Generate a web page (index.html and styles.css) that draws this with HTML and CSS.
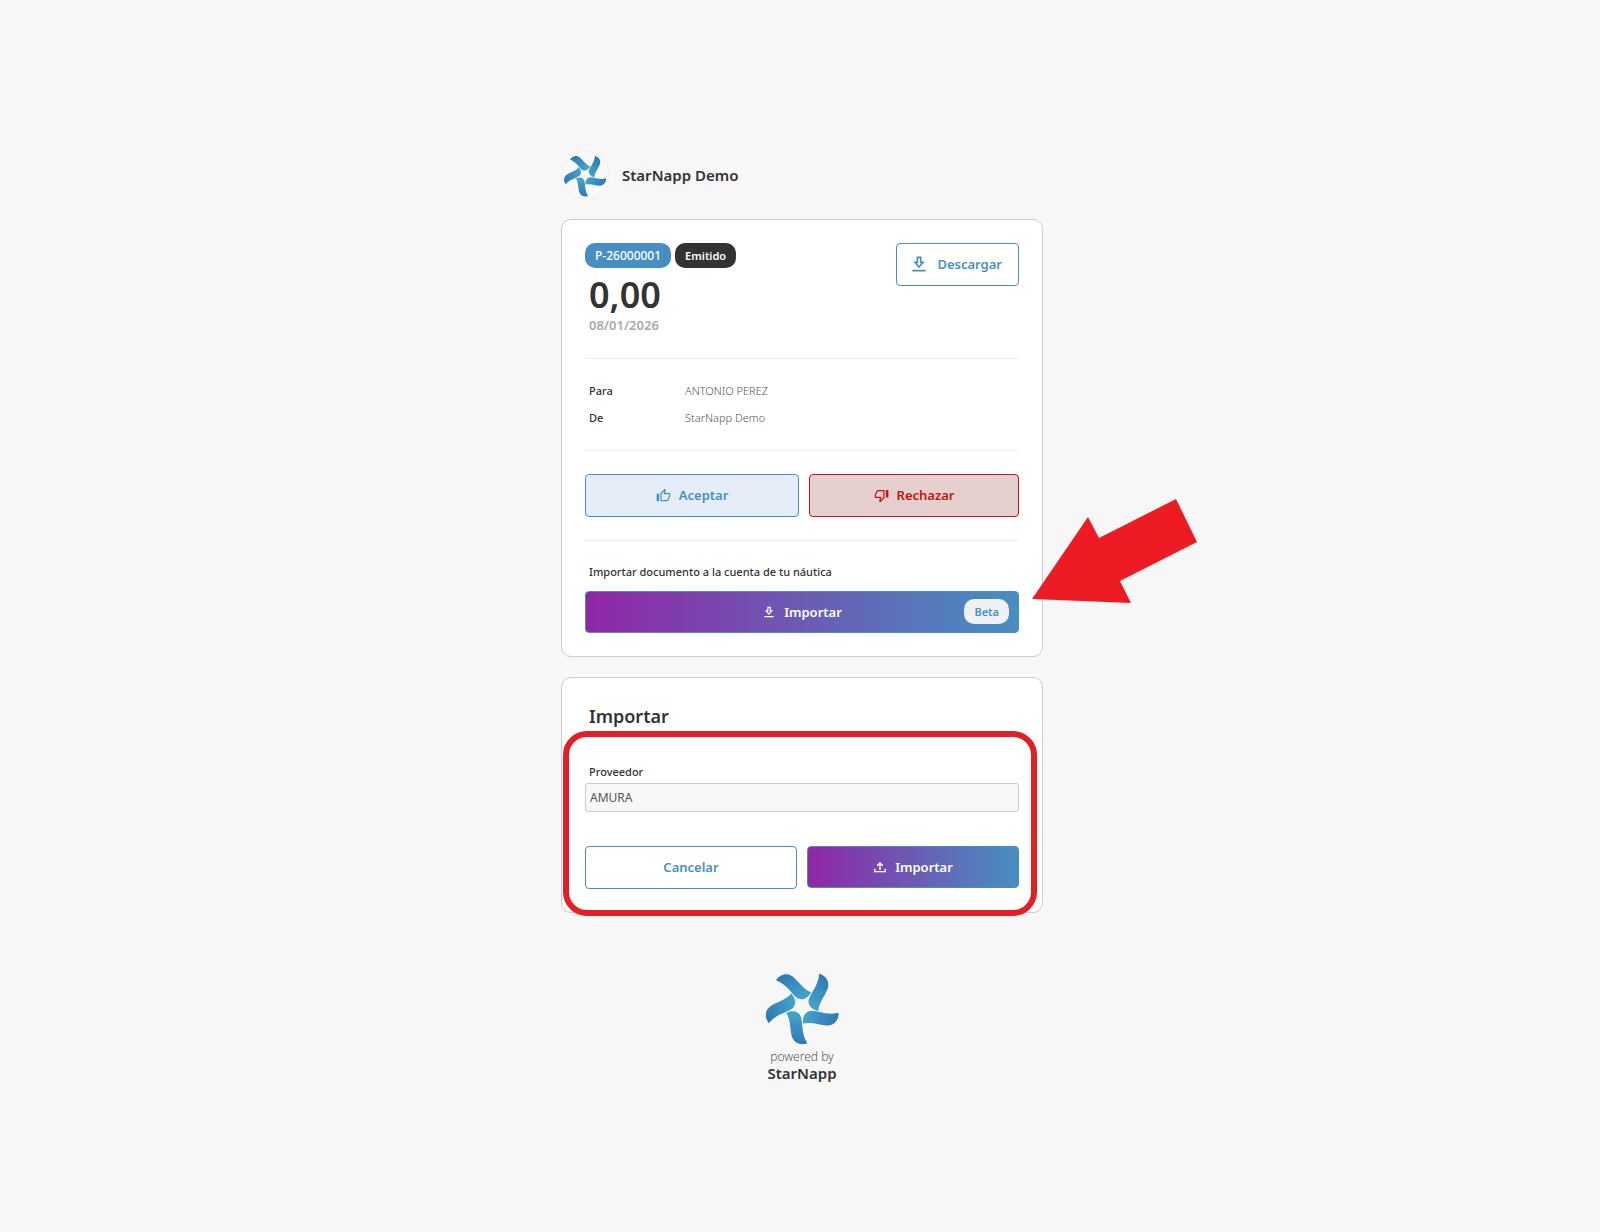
FILE: index.html
```
<!DOCTYPE html>
<html lang="es">
<head>
    <meta charset="UTF-8">
    <meta name="viewport" content="width=device-width, initial-scale=1">
    <title>StarNapp Demo - P-26000001</title>
    <link rel="stylesheet" href="styles.css">
</head>
<body>
    <svg class="defs" aria-hidden="true">
        <defs>
            <linearGradient id="blade-fill" x1="0" y1="0" x2="0" y2="1">
                <stop offset="0" stop-color="#43a6cb"/>
                <stop offset="1" stop-color="#3078b4"/>
            </linearGradient>
            <path id="blade" d="M-46 18 C-30 10 -10 12 -3 30 C3 52 -2 80 16 107 C-2 114 -24 108 -30 86 C-36 60 -32 42 -46 18Z" fill="url(#blade-fill)"/>
            <symbol id="logo" viewBox="-111 -110 222 222">
                <use href="#blade"/>
                <use href="#blade" transform="rotate(72)"/>
                <use href="#blade" transform="rotate(144)"/>
                <use href="#blade" transform="rotate(216)"/>
                <use href="#blade" transform="rotate(288)"/>
            </symbol>
            <symbol id="download" viewBox="0 0 24 24">
                <path fill="currentColor" d="M19 9h-4V3H9v6H5l7 8 7-8zm-8 2V5h2v6h1.600L12 14l-2.600-3H11zM4 19h16v2H4z"/>
            </symbol>
            <symbol id="thumb" viewBox="0 0 24 24">
                <path fill="currentColor" d="M9 21h9c.83 0 1.540-.5 1.840-1.220l3.020-7.050c.09-.23.14-.47.14-.73v-2c0-1.100-.9-2-2-2h-6.310l.95-4.570.03-.32c0-.41-.17-.79-.44-1.060L14.170 1 7.580 7.590C7.220 7.950 7 8.450 7 9v10c0 1.100.9 2 2 2zM9 9l4.340-4.340L12 10h9v2l-3 7H9V9zM1 9h4v12H1z"/>
            </symbol>
            <symbol id="upload" viewBox="0 0 24 24">
                <path fill="none" stroke="currentColor" stroke-width="2.400" d="M12 17V5M7 10 12 5 17 10M3 15v5h18v-5"/>
            </symbol>
        </defs>
    </svg>

    <main class="page">
        <header class="company">
            <svg class="company-logo" aria-hidden="true"><use href="#logo"/></svg>
            <h1>StarNapp Demo</h1>
        </header>

        <section class="card">
            <div class="summary">
                <div>
                    <div class="badges">
                        <span class="badge blue">P-26000001</span>
                        <span class="badge dark">Emitido</span>
                    </div>
                    <p class="amount">0,00</p>
                    <p class="date">08/01/2026</p>
                </div>
                <button type="button" class="btn download">
                    <svg class="icon-lg" aria-hidden="true"><use href="#download"/></svg>
                    Descargar
                </button>
            </div>
            <hr>
            <dl class="parties">
                <dt>Para</dt>
                <dd>ANTONIO PEREZ</dd>
                <dt>De</dt>
                <dd>StarNapp Demo</dd>
            </dl>
            <hr>
            <div class="actions decision">
                <button type="button" class="btn accept">
                    <svg class="icon" aria-hidden="true"><use href="#thumb"/></svg>
                    Aceptar
                </button>
                <button type="button" class="btn reject">
                    <svg class="icon flip" aria-hidden="true"><use href="#thumb"/></svg>
                    Rechazar
                </button>
            </div>
            <hr>
            <p class="label">Importar documento a la cuenta de tu náutica</p>
            <div class="import">
                <button type="button" class="btn gradient">
                    <svg class="icon-sm" aria-hidden="true"><use href="#download"/></svg>
                    Importar
                    <span class="badge beta">Beta</span>
                </button>
                <svg class="arrow" viewBox="0 0 166 105" aria-hidden="true">
                    <polygon points="0,100 56,18 67,39 144,0 165,43 88,82 99,104"/>
                </svg>
            </div>
        </section>

        <form class="card import-form" onsubmit="return false;">
            <h2>Importar</h2>
            <label class="label" for="proveedor">Proveedor</label>
            <input type="text" id="proveedor" value="AMURA" readonly>
            <div class="actions">
                <button type="button" class="btn">Cancelar</button>
                <button type="submit" class="btn gradient">
                    <svg class="icon-sm" aria-hidden="true"><use href="#upload"/></svg>
                    Importar
                </button>
            </div>
            <div class="highlight"></div>
        </form>

        <footer class="powered">
            <svg class="powered-logo" aria-hidden="true"><use href="#logo"/></svg>
            <span>powered by</span>
            <strong>StarNapp</strong>
        </footer>
    </main>
</body>
</html>
```
FILE: styles.css
```
* {
    box-sizing: border-box;
}
body {
    display: flex;
    align-items: center;
    justify-content: center;
    min-height: 100vh;
    margin: 0;
    padding: 16px 12px 16px 16px;
    font-family: "Noto Sans", "Open Sans", sans-serif;
    font-size: 12px;
    line-height: 16px;
    color: #333;
    background-color: #f7f7f7;
}
h1, h2, p, dl, dd {
    margin: 0;
}
.defs {
    position: absolute;
    width: 0;
    height: 0;
}
.page {
    width: 100%;
    max-width: 482px;
}

/* header */
.company {
    display: flex;
    align-items: center;
    gap: 13px;
    margin-bottom: 20px;
}
.company-logo {
    width: 48px;
    height: 48px;
    padding: 1px;
    border: 1px solid #f2f2f2;
    border-radius: 50%;
    background-color: #f9f9f9;
}
h1 {
    font-size: 15px;
    font-weight: 600;
    line-height: 24px;
}

/* cards */
.card {
    position: relative;
    margin-bottom: 20px;
    padding: 23px;
    border: 1px solid #ccc;
    border-radius: 10px;
    background-color: #fff;
}
hr {
    margin: 23px 0;
    border: 0;
    border-top: 1px solid #eee;
}
.summary {
    display: flex;
    align-items: flex-start;
    justify-content: space-between;
}
.badges {
    display: flex;
    gap: 4px;
}
.badge {
    padding: 0 10px;
    border-radius: 10px;
    font-size: 11px;
    font-weight: 600;
    line-height: 25px;
    color: #fff;
}
.blue {
    font-size: 12px;
    font-weight: 500;
    background-color: #478fc2;
}
.dark {
    background-color: #333;
}
.amount {
    padding: 6px 4px 0;
    font-size: 36px;
    font-weight: 600;
    line-height: 41px;
}
.date {
    padding: 0 4px;
    font-size: 13px;
    font-weight: 600;
    line-height: 20px;
    color: #aaa;
}
.parties {
    display: grid;
    grid-template-columns: 96px 1fr;
    row-gap: 11px;
    padding: 1px 4px;
    font-size: 11px;
}
.parties dt {
    font-weight: 500;
}
.parties dd {
    font-weight: 300;
    color: #555;
}
.label {
    display: block;
    padding: 0 4px;
    font-size: 11px;
    font-weight: 500;
}

/* buttons */
.btn {
    display: flex;
    align-items: center;
    justify-content: center;
    gap: 8px;
    height: 43px;
    padding: 0 16px 1px;
    border: 1px solid #478fc2;
    border-radius: 4px;
    font-family: inherit;
    font-size: 13px;
    font-weight: 600;
    color: #478fc2;
    background-color: #fff;
    cursor: pointer;
}
.download {
    padding-left: 12px;
}
.accept {
    background-color: #e5eef8;
}
.reject {
    border-color: #c41414;
    color: #c41414;
    background-color: #e6cfcf;
}
.gradient {
    height: 42px;
    color: #fff;
    background: linear-gradient(90deg, #9026a6, #478fc2) border-box;
}
.actions {
    display: grid;
    grid-template-columns: 1fr 1fr;
    gap: 10px;
}
.decision {
    grid-template-columns: 51fr 50fr;
}
.icon {
    width: 15px;
    height: 15px;
}
.icon-sm {
    width: 14px;
    height: 14px;
}
.icon-lg {
    width: 20px;
    height: 20px;
}
.flip {
    transform: rotate(180deg);
}
.import {
    position: relative;
    margin-top: 11px;
}
.import .btn {
    width: 100%;
}
.beta {
    position: absolute;
    right: 10px;
    color: #478fc2;
    background-color: #eef1f5;
}
.arrow {
    position: absolute;
    top: -92px;
    left: calc(100% + 13px);
    width: 166px;
    height: 105px;
    fill: #ed1c24;
}

/* import form */
h2 {
    padding: 0 4px;
    margin: 3px 0 36px;
    font-size: 18px;
    font-weight: 600;
    line-height: 24px;
}
input {
    display: block;
    width: 100%;
    height: 29px;
    margin: 3px 0 34px;
    padding: 0 4px;
    border: 1px solid #ccc;
    border-radius: 3px;
    font-family: inherit;
    font-size: 12px;
    color: #555;
    background-color: #f7f7f7;
}
.highlight {
    position: absolute;
    inset: 53px 5px -4px 1px;
    border: 6px solid #e21f26;
    border-radius: 24px;
    pointer-events: none;
}

/* footer */
.powered {
    display: flex;
    flex-direction: column;
    align-items: center;
    padding-top: 36px;
}
.powered-logo {
    width: 76px;
    height: 76px;
    margin-bottom: 4px;
}
.powered span {
    font-weight: 300;
    color: #555;
}
.powered strong {
    font-size: 15px;
    font-weight: 600;
    line-height: 16px;
}
```
